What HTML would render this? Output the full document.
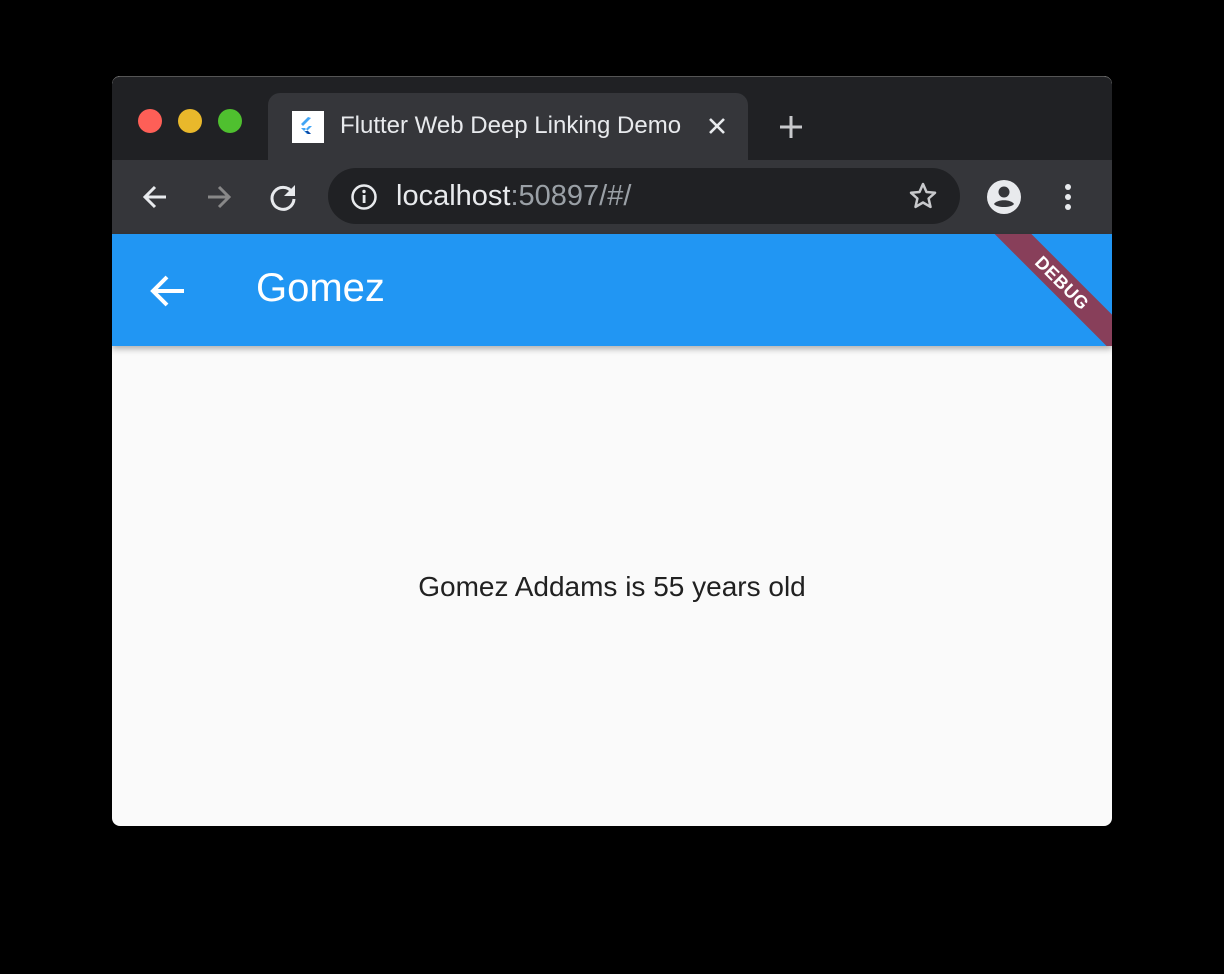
<!DOCTYPE html>
<html><head><meta charset="utf-8"><style>
*{margin:0;padding:0;box-sizing:border-box}
body{width:1224px;height:974px;background:#000;position:relative;overflow:hidden;font-family:"Liberation Sans",sans-serif}
.win{position:absolute;left:112px;top:76px;width:1000px;height:750px;border-radius:8px;overflow:hidden;background:#fafafa}
.tabs{position:absolute;left:0;top:0;width:1000px;height:84px;background:#202124;border-top:1px solid #555;border-radius:8px 8px 0 0}
.dot{position:absolute;top:32px;width:24px;height:24px;border-radius:50%}
.tab{position:absolute;left:156px;top:16px;width:480px;height:68px;background:#35363a;border-radius:12px 12px 0 0}
.tb{position:absolute;left:0;top:84px;width:1000px;height:74px;background:#35363a}
.url{position:absolute;left:216px;top:8px;width:632px;height:56px;background:#202124;border-radius:28px}
.app{position:absolute;left:0;top:158px;width:1000px;height:112px;background:#2196f3;overflow:hidden;box-shadow:0 3px 6px rgba(0,0,0,.3)}
.banner{position:absolute;left:840px;top:36px;width:220px;height:26px;background:#883f5a;transform:rotate(45deg);color:#fff;font-weight:bold;font-size:18px;text-align:center;line-height:26px;letter-spacing:0.5px}
.t{position:absolute;color:#fff;white-space:nowrap}
</style></head><body>
<div class="win">
 <div class="tabs">
  <div class="dot" style="left:26px;background:#fe5f57"></div>
  <div class="dot" style="left:66px;background:#e9b82b"></div>
  <div class="dot" style="left:106px;background:#4fc02f"></div>
  <div class="tab">
   <div style="position:absolute;left:24px;top:18px;width:32px;height:32px;background:#fff">
    <svg width="32" height="32"><path d="M16 6 L9 13 L11 15 L19 7Z M9 17 L15 23 L19 23 L13 17 Z M12 20 L17 15 L20 15 L15 20Z" fill="#42a5f5"/><path d="M13 20 l3 3 h3 l-3-3z" fill="#0d47a1"/></svg>
   </div>
   <div class="t" style="left:72px;top:19px;font-size:24px;color:#e8eaed">Flutter Web Deep Linking Demo</div>
   <svg style="position:absolute;left:440px;top:24px" width="18" height="18"><path d="M2 2l14 14M16 2L2 16" stroke="#e8eaed" stroke-width="2.6"/></svg>
  </div>
  <svg style="position:absolute;left:666px;top:37px" width="26" height="26"><path d="M13 2v22M2 13h22" stroke="#c8c9cc" stroke-width="3"/></svg>
 </div>
 <div class="tb">
  <svg style="position:absolute;left:28px;top:22px" width="30" height="30"><path d="M26 15H5M15 5L5 15l10 10" stroke="#e8eaed" stroke-width="3" fill="none"/></svg>
  <svg style="position:absolute;left:92px;top:22px" width="30" height="30"><path d="M4 15h21M15 5l10 10-10 10" stroke="#888" stroke-width="3" fill="none"/></svg>
  <svg style="position:absolute;left:156px;top:21px" width="32" height="32"><path d="M24 11A11 11 0 1 0 26 18" stroke="#e8eaed" stroke-width="3" fill="none"/><path d="M27 4v11h-11z" fill="#e8eaed"/></svg>
  <div class="url">
   <svg style="position:absolute;left:22px;top:15px" width="28" height="28"><circle cx="14" cy="14" r="11.5" stroke="#e8eaed" stroke-width="2.5" fill="none"/><rect x="12.7" y="12" width="2.8" height="8" fill="#e8eaed"/><circle cx="14" cy="8.5" r="1.7" fill="#e8eaed"/></svg>
   <div class="t" style="left:68px;top:12px;font-size:29px;color:#e8eaed">localhost<span style="color:#9aa0a6">:50897/#/</span></div>
   <svg style="position:absolute;left:580px;top:13px" width="30" height="30"><path d="M15 3l3.5 8 8.5.8-6.4 5.7 1.9 8.4L15 21.5 7.5 25.9l1.9-8.4L3 11.8l8.5-.8z" stroke="#c8c9cc" stroke-width="2.5" fill="none" stroke-linejoin="round"/></svg>
  </div>
  <svg style="position:absolute;left:874px;top:19px" width="36" height="36"><circle cx="18" cy="18" r="17" fill="#e8eaed"/><circle cx="18" cy="13" r="5.5" fill="#35363a"/><path d="M8 25c3-5 17-5 20 0c-3 4-17 4-20 0z" fill="#35363a"/></svg>
  <svg style="position:absolute;left:950px;top:22px" width="12" height="32"><circle cx="6" cy="5" r="3" fill="#e8eaed"/><circle cx="6" cy="15" r="3" fill="#e8eaed"/><circle cx="6" cy="25" r="3" fill="#e8eaed"/></svg>
 </div>
 <div class="app">
  <svg style="position:absolute;left:38px;top:40px" width="36" height="34"><path d="M34 17H4M17 3L3 17l14 14" stroke="#fff" stroke-width="4" fill="none"/></svg>
  <div class="t" style="left:144px;top:32px;font-size:40px">Gomez</div>
  <div class="banner">DEBUG</div>
 </div>
 <div style="position:absolute;left:0;top:495px;width:1000px;text-align:center;font-size:28px;color:#212121">Gomez Addams is 55 years old</div>
</div>
</body></html>
